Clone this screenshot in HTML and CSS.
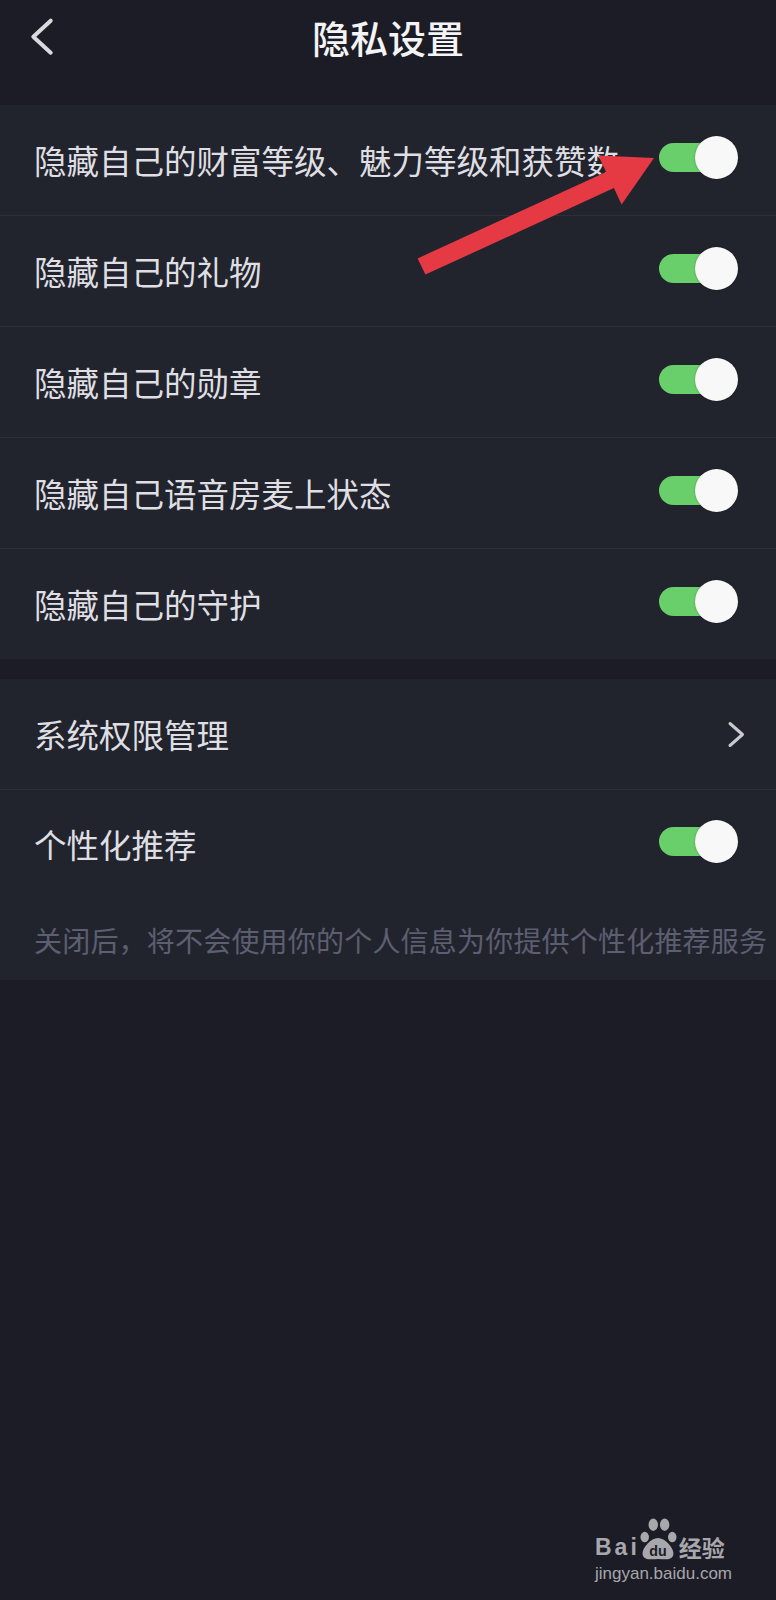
FILE: index.html
```html
<!DOCTYPE html>
<html lang="zh-CN">
<head>
    <meta charset="UTF-8">
    <meta name="viewport" content="width=device-width, initial-scale=1.0">
    <title>隐私设置</title>
    <link rel="stylesheet" href="styles.css">
</head>
<body>
    <div class="page">
        <header class="nav-bar">
            <button class="back-btn" aria-label="返回">
                <svg width="28" height="42" viewBox="0 0 28 42">
                    <polyline points="22.7,4.7 5.3,20.7 22.7,36.7" fill="none" stroke="#d9d9de" stroke-width="4" stroke-linecap="round" stroke-linejoin="round"/>
                </svg>
            </button>
            <h1 class="nav-title">隐私设置</h1>
            <span></span>
        </header>

        <section class="settings-group">
            <div class="setting-row">
                <span class="setting-label">隐藏自己的财富等级、魅力等级和获赞数</span>
                <span class="switch"></span>
            </div>
            <div class="setting-row">
                <span class="setting-label">隐藏自己的礼物</span>
                <span class="switch"></span>
            </div>
            <div class="setting-row">
                <span class="setting-label">隐藏自己的勋章</span>
                <span class="switch"></span>
            </div>
            <div class="setting-row">
                <span class="setting-label">隐藏自己语音房麦上状态</span>
                <span class="switch"></span>
            </div>
            <div class="setting-row">
                <span class="setting-label">隐藏自己的守护</span>
                <span class="switch"></span>
            </div>
        </section>

        <section class="settings-group second">
            <div class="setting-row link-row">
                <span class="setting-label">系统权限管理</span>
                <svg class="chevron" width="18" height="30" viewBox="0 0 18 30">
                    <polyline points="3,4.5 15.5,15.5 3,26.5" fill="none" stroke="#c9c9cf" stroke-width="3" stroke-linecap="round" stroke-linejoin="round"/>
                </svg>
            </div>
            <div class="setting-row tall-row">
                <span class="setting-label">个性化推荐</span>
                <span class="switch"></span>
            </div>
            <p class="setting-note">关闭后，将不会使用你的个人信息为你提供个性化推荐服务</p>
        </section>

        <!-- red annotation arrow on top of the screenshot -->
        <svg class="annotation-arrow" width="250" height="140" viewBox="0 0 250 140">
            <polygon points="7.6,113.4 196.1,26.9 188.4,10.6 244,13 211.6,59.4 203.9,43.1 15.4,129.6" fill="#e53a44"/>
        </svg>

        <div class="watermark">
            <div class="wm-logo">
                <span class="wm-bai">Bai</span>
                <svg class="wm-paw" width="38" height="42" viewBox="0 0 40 44">
                    <ellipse cx="6" cy="20" rx="4.5" ry="5.5" fill="#a7a7ac"/>
                    <ellipse cx="15" cy="7" rx="5" ry="6.5" fill="#a7a7ac"/>
                    <ellipse cx="27" cy="7" rx="5" ry="6.5" fill="#a7a7ac"/>
                    <ellipse cx="35" cy="20" rx="4.5" ry="5.5" fill="#a7a7ac"/>
                    <path d="M20 21 C12 21 2 33 4 39 C6 45 14 43 20 43 C26 43 34 45 36 39 C38 33 28 21 20 21 Z" fill="#a7a7ac"/>
                    <text x="20" y="40" text-anchor="middle" class="wm-du">du</text>
                </svg>
                <span class="wm-jy">经验</span>
            </div>
            <div class="wm-url">jingyan.baidu.com</div>
        </div>
    </div>
</body>
</html>
```

FILE: styles.css
```css
body {
    margin: 0;
    background-color: #1b1c25;
    font-family: "Noto Sans CJK SC", "Noto Sans", sans-serif;
    color: #dfdfe3;
}

.page {
    position: relative;
    width: 776px;
    min-height: 1600px;
}

.nav-bar {
    height: 105px;
    display: grid;
    grid-template-columns: 1fr auto 1fr;
    align-items: start;
    background-color: #1b1c25;
}

.back-btn {
    justify-self: start;
    background: none;
    border: none;
    padding: 0;
    margin: 16px 0 0 28px;
    width: 28px;
    height: 42px;
    cursor: pointer;
}

.back-btn svg {
    display: block;
}

.nav-title {
    margin: 0;
    font-size: 38px;
    font-weight: 500;
    line-height: 74px;
    color: #f4f4f6;
}

.settings-group {
    background-color: #22242d;
}

.settings-group.second {
    margin-top: 20px;
}

.setting-row {
    height: 110px;
    display: flex;
    align-items: center;
    justify-content: space-between;
    padding: 0 38px 0 34px;
}

.setting-row + .setting-row {
    border-top: 1px solid #2c2e38;
}

.setting-row.tall-row {
    height: 108px;
}

.setting-label {
    font-size: 32.5px;
    line-height: 40px;
    white-space: nowrap;
}

.link-row {
    padding-right: 31px;
}

.chevron {
    display: block;
}

.switch {
    width: 70px;
    height: 29px;
    border-radius: 15px;
    background-color: #69cf6a;
    display: flex;
    align-items: center;
    justify-content: flex-end;
    margin: 0 9px 6px 0;
    flex-shrink: 0;
}

.switch::after {
    content: "";
    width: 43px;
    height: 43px;
    border-radius: 50%;
    background-color: #f8f8f8;
    box-shadow: 0 0 2px rgba(0, 0, 0, 0.35);
    margin-right: -9px;
    flex-shrink: 0;
}

.setting-note {
    margin: 0;
    padding: 22px 0 20px 34px;
    font-size: 28px;
    letter-spacing: 0.2px;
    line-height: 40px;
    color: #5c5e71;
    white-space: nowrap;
}

.annotation-arrow {
    position: absolute;
    left: 410px;
    top: 145px;
}

.watermark {
    position: absolute;
    left: 595px;
    top: 1516px;
    color: #a7a7ac;
}

.wm-logo {
    display: flex;
    align-items: flex-end;
    height: 44px;
}

.wm-bai {
    font-family: "Liberation Sans", Arial, sans-serif;
    font-weight: bold;
    font-size: 23px;
    letter-spacing: 3px;
    line-height: 23px;
    margin-bottom: 1px;
}

.wm-paw {
    display: block;
    margin-left: -1px;
}

.wm-du {
    font-family: "Liberation Sans", Arial, sans-serif;
    font-weight: bold;
    font-size: 15px;
    fill: #1b1c25;
}

.wm-jy {
    font-size: 23px;
    font-weight: bold;
    line-height: 26px;
    margin-left: 2px;
}

.wm-url {
    font-family: "Liberation Sans", Arial, sans-serif;
    font-size: 17px;
    line-height: 22px;
    margin-top: 3px;
}
```
